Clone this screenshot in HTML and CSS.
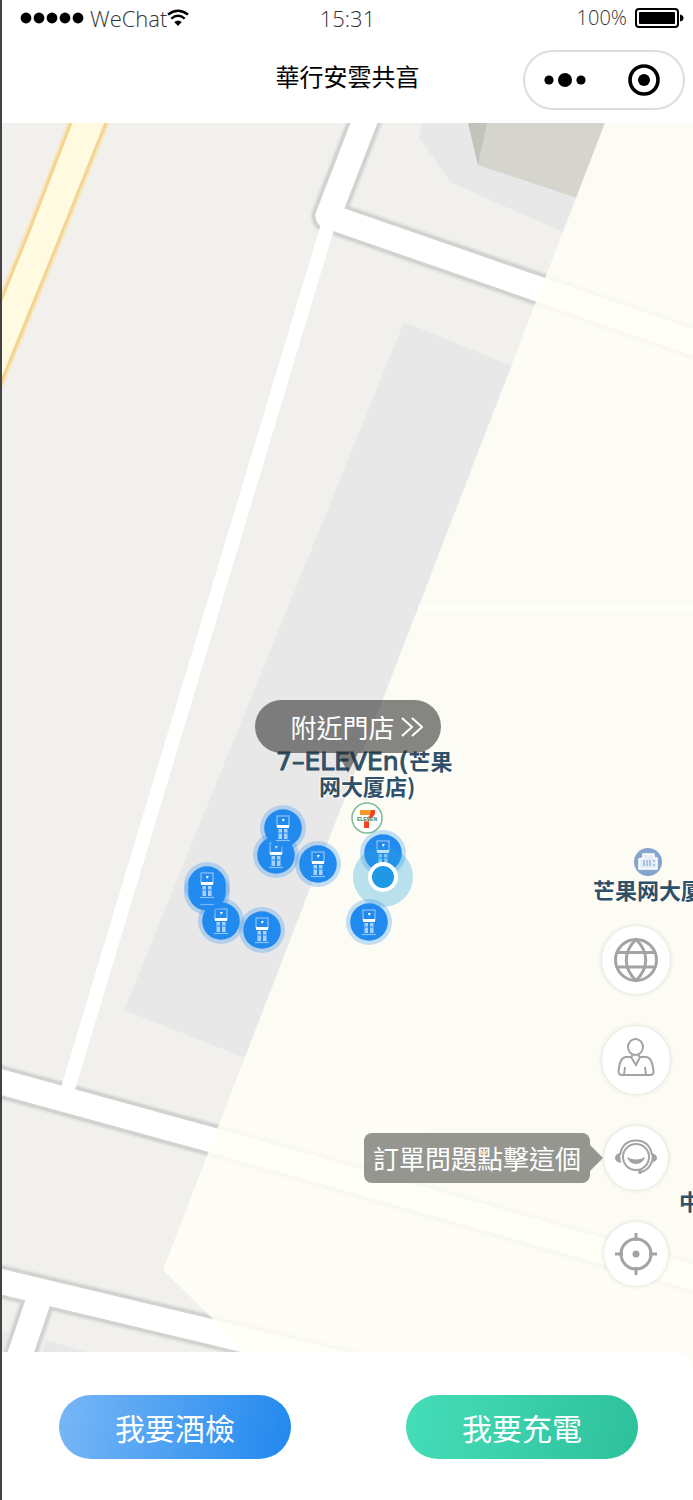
FILE: index.html
```html
<!DOCTYPE html>
<html lang="zh-Hant">

<head>
    <meta charset="UTF-8" />
    <meta name="viewport" content="width=device-width, initial-scale=1">
    <title>華行安雲共亯</title>
    <link rel="stylesheet" href="styles.css">
</head>

<body>
    <div class="status-bar">
        <div class="carrier">
            <svg class="signal" width="64" height="12" viewBox="0 0 64 12">
                <circle cx="6" cy="6" r="5.4" />
                <circle cx="19" cy="6" r="5.4" />
                <circle cx="32" cy="6" r="5.4" />
                <circle cx="45" cy="6" r="5.4" />
                <circle cx="58" cy="6" r="5.4" />
            </svg>
            <span class="carrier-name">WeChat</span>
            <svg class="wifi" width="22" height="18" viewBox="0 0 22 18" fill="none" stroke="#000" stroke-width="2.4">
                <path d="M1 5.6Q11 -2 21 5.6" />
                <path d="M4.3 9.6Q11 4 17.7 9.6" />
                <path d="M11 17L7.2 13Q11 9.8 14.8 13Z" fill="#000" stroke="none" />
            </svg>
        </div>
        <span class="clock">15:31</span>
        <div class="battery">
            <span>100%</span>
            <svg width="50" height="20" viewBox="0 0 50 20">
                <rect x="1" y="1" width="42" height="18" rx="3" fill="none" stroke="#000" stroke-width="2" />
                <rect x="4" y="4" width="36" height="12" rx="1" />
                <path d="M45 6.5Q48.500 7 48.500 10T45 13.500Z" />
            </svg>
        </div>
    </div>

    <header class="nav-bar">
        <h1 class="title">華行安雲共亯</h1>
        <div class="capsule">
            <button class="capsule-btn" type="button" aria-label="更多">
                <svg width="42" height="16" viewBox="0 0 42 16">
                    <circle cx="5" cy="8" r="4.6" />
                    <circle cx="21" cy="8" r="7" />
                    <circle cx="37" cy="8" r="4.6" />
                </svg>
            </button>
            <button class="capsule-btn" type="button" aria-label="關閉">
                <svg width="32" height="32" viewBox="0 0 32 32">
                    <circle cx="16" cy="16" r="14" fill="none" stroke="#000" stroke-width="3.600" />
                    <circle cx="16" cy="16" r="6" />
                </svg>
            </button>
        </div>
    </header>

    <main class="map">
        <svg class="map-canvas" viewBox="2 123 691 1249" preserveAspectRatio="xMidYMid slice">
            <defs>
                <symbol id="pin" viewBox="-24 -24 48 48">
                    <circle r="23" fill="#2a8ff0" opacity="0.28" />
                    <circle r="18.800" fill="#218aee" />
                    <g fill="none" stroke="#8fc4f8" stroke-width="1.200">
                        <rect x="-6" y="-12" width="12" height="10" />
                        <path d="M-7 12.500H7" />
                    </g>
                    <path d="M-4.500 1H-1V11H-4.500ZM1 1H4.500V11H1Z" fill="#a9d1fa" />
                    <path d="M-4.500 5H4.500" stroke="#218aee" />
                    <path d="M-6 -3H6V0H-6Z" fill="#fff" />
                    <path d="M-1 -9L2 -9L0 -6Z" fill="#fff" />
                </symbol>
                <g id="roads" fill="none">
                    <path d="M371 105L328 216L700 345" stroke-linejoin="round" />
                    <path d="M-10 1079L212 1140L350 1179L710 1282" />
                    <path d="M-10 1279L212 1332L420 1383" />
                    <path d="M42 1290L8 1390" />
                </g>
            </defs>

            <rect x="0" y="100" width="700" height="1300" fill="#f1f0ec" />

            <!-- blocks and buildings -->
            <g fill="#e8e8e8">
                <path d="M404 322L700 443V1238L124 1010Z" />
                <path d="M423 120L419 137L450 182L700 293V120Z" />
                <path d="M46 1340L100 1356V1380H30Z" />
                <path d="M0 1330L9 1332L0 1356Z" />
            </g>
            <path d="M468 123L478 165L577 198L606 120H468Z" fill="#d5d5cd" />
            <path d="M468 123H487L478 165Z" fill="#c2c3bd" />

            <!-- main road -->
            <path d="M72 120L28 234L-10 327V410L57 245L107 120Z" fill="#fffae0" stroke="#f8e6c0" stroke-width="7" />
            <path d="M72 120L28 234L-10 327V410L57 245L107 120Z" fill="#fffae0" stroke="#f3d490" stroke-width="3" />

            <!-- side roads, casing first -->
            <use href="#roads" stroke="#e6e6e2" stroke-width="36" />
            <use href="#roads" stroke="#d2d3d0" stroke-width="32" />
            <use href="#roads" stroke="#fff" stroke-width="25" />
            <path d="M328 225L67 1092" stroke="#fff" stroke-width="14" />

            <!-- service area -->
            <path d="M606 120L163 1270L275 1380H700V120Z" fill="#fffff6" opacity="0.86" />
            <path d="M418 608H700" stroke="#fff" stroke-width="4" opacity="0.8" />

            <g class="place">
                <text x="276" y="770"><tspan class="place-latin">7–ELEVEn(</tspan>芒果</text>
                <text x="319" y="795">网大厦店)</text>
                <text x="593" y="899">芒果网大厦</text>
                <text x="679" y="1210">中</text>
            </g>

            <g>
                <circle cx="367" cy="818" r="15" fill="#fff" stroke="#7fb89c" stroke-width="1.500" />
                <path d="M360 810H371V815H360Z" fill="#f39a26" />
                <path d="M371 810H375V814L369 822V828H364V821L370 815Z" fill="#f0431f" />
                <path d="M357 817.500H378V821.500H357Z" fill="#fff" opacity="0.7" />
                <text class="brand" x="367" y="821">ELEVEN</text>
            </g>

            <g>
                <circle cx="648" cy="862" r="14" fill="#85a5cf" />
                <path d="M639 869V859L643 858V854H654V858H657V869Z" fill="#e6eefa" stroke="#fff" stroke-width="1.500" />
                <path d="M644 860V866M647 860V866M650 860V866M654 860V862M654 864V866" stroke="#85a5cf" stroke-width="1.200" />
            </g>

            <use href="#pin" x="252" y="831" width="48" height="48" />
            <use href="#pin" x="259" y="804" width="48" height="48" />
            <use href="#pin" x="294" y="840" width="48" height="48" />
            <use href="#pin" x="197" y="897" width="48" height="48" />
            <use href="#pin" x="183" y="868" width="48" height="48" />
            <use href="#pin" x="183" y="861" width="48" height="48" />
            <use href="#pin" x="238" y="906" width="48" height="48" />
            <use href="#pin" x="359" y="829" width="48" height="48" />

            <!-- current position -->
            <circle cx="383" cy="877" r="30" fill="#2ba5e0" opacity="0.32" />
            <use href="#pin" x="345" y="898" width="48" height="48" />
            <circle cx="383" cy="877" r="13" fill="#1f98e6" stroke="#fff" stroke-width="4" />
        </svg>

        <button class="nearby" type="button">
            附近門店
            <svg width="22" height="20" viewBox="0 0 22 20" fill="none" stroke="#fff" stroke-width="2">
                <path d="M1 1L11 10L1 19M11 1L21 10L11 19" />
            </svg>
        </button>

        <div class="tools">
            <button class="tool" type="button" aria-label="語言">
                <svg width="46" height="46" viewBox="0 0 46 46">
                    <circle cx="23" cy="23" r="20.500" />
                    <path d="M23 2.500C10 15 10 31 23 43.500C36 31 36 15 23 2.500ZM5 15.500H41M5 30H41" />
                </svg>
            </button>
            <button class="tool thin" type="button" aria-label="個人中心">
                <svg width="46" height="46" viewBox="0 0 46 46">
                    <ellipse cx="22.500" cy="10" rx="7.500" ry="8" />
                    <path d="M18 20H13C7 20 6 29 5.500 34Q5.500 38 9 38H37Q41 38 40.500 34C40 29 39 20 33 20H27L23 28L18 20M20 18L18 20M25 18L27 20M12 30L11 38M32 30L33 38" />
                </svg>
            </button>
            <div class="tool-row">
                <span class="tip">訂單問題點擊這個</span>
                <button class="tool small thin" type="button" aria-label="訂單問題">
                    <svg width="46" height="46" viewBox="0 0 46 46">
                        <circle cx="23" cy="22" r="13" />
                        <path d="M7 20C9 9 15 5.500 23 5.500S37 9 39 20M39 26Q36 36 27 37" />
                        <path d="M7 18Q2 19 2 23T8 28ZM39 18Q44 20 44 23T38 28Z" fill="#a3a3a3" stroke="none" />
                        <path d="M14 22Q23 27 32 22Q30 29 23 29T14 22Z" fill="#a3a3a3" stroke="none" />
                        <circle cx="27" cy="37" r="2" fill="#a3a3a3" stroke="none" />
                    </svg>
                </button>
            </div>
            <button class="tool small" type="button" aria-label="定位">
                <svg width="46" height="46" viewBox="0 0 46 46">
                    <circle cx="23" cy="23" r="15" />
                    <circle cx="23" cy="23" r="3.500" fill="#a3a3a3" stroke="none" />
                    <path d="M23 2V10M23 36V44M2 23H10M36 23H44" />
                </svg>
            </button>
        </div>
    </main>

    <footer class="actions">
        <button class="action alcohol" type="button">我要酒檢</button>
        <button class="action charge" type="button">我要充電</button>
    </footer>
</body>

</html>
```
FILE: styles.css
```css
* {
    box-sizing: border-box;
}

body {
    margin: 0;
    min-height: 100vh;
    display: flex;
    flex-direction: column;
    border-left: 2px solid #434347;
    background: #fff;
    color: #000;
    font-family: "Noto Sans CJK TC", sans-serif;
    overflow-x: hidden;
}

button {
    border: 0;
    padding: 0;
    background: none;
    font-family: inherit;
    cursor: pointer;
}

svg {
    display: block;
    flex: none;
}

.status-bar {
    display: grid;
    grid-template-columns: 1fr auto 1fr;
    align-items: center;
    height: 36px;
    padding: 0 8px;
    color: #333;
    font-family: "Open Sans", sans-serif;
    font-weight: 300;
    font-size: 22px;
    line-height: 34px;
}

.carrier {
    display: flex;
    align-items: center;
    padding-left: 10px;
}

.carrier-name {
    margin-left: 6px;
}

.battery {
    display: flex;
    align-items: center;
    justify-content: flex-end;
    gap: 8px;
    font-size: 20px;
}

.nav-bar {
    display: grid;
    grid-template-columns: 1fr auto 1fr;
    align-items: center;
    height: 87px;
    padding: 0 8px;
}

.title {
    grid-column: 2;
    margin: 0;
    padding-bottom: 8px;
    font-size: 24px;
    font-weight: 400;
    line-height: 32px;
}

.capsule {
    justify-self: end;
    display: flex;
    width: 162px;
    height: 60px;
    border: 2px solid #dedede;
    border-radius: 30px;
}

.capsule-btn {
    flex: 1;
    display: flex;
    align-items: center;
    justify-content: center;
}

/* runs under the rounded top of the action panel */
.map {
    position: relative;
    flex: 1;
    min-height: 1180px;
    margin-bottom: -20px;
    overflow: hidden;
}

.map-canvas {
    position: absolute;
    top: 0;
    left: 0;
    width: 100%;
    height: 100%;
}

.place {
    fill: #2f5066;
    stroke: #fff;
    stroke-width: 2px;
    paint-order: stroke;
    font-family: "Noto Sans CJK SC", sans-serif;
    font-size: 22px;
    font-weight: 700;
}

.place-latin {
    stroke: #2f5066;
    stroke-width: 1px;
    font-family: "DejaVu Sans", sans-serif;
    font-size: 25px;
    font-weight: 400;
}

.brand {
    fill: #2b8a63;
    font-family: "Liberation Sans", sans-serif;
    font-size: 5px;
    font-weight: 700;
    text-anchor: middle;
}

.nearby {
    position: absolute;
    top: 577px;
    left: 50%;
    transform: translateX(-50%);
    display: flex;
    align-items: center;
    justify-content: center;
    gap: 6px;
    width: 186px;
    height: 53px;
    padding-left: 18px;
    border-radius: 27px;
    background: rgba(40, 40, 40, 0.56);
    color: #fff;
    font-size: 26px;
    font-weight: 400;
    white-space: nowrap;
}

.nearby::after {
    content: "";
    position: absolute;
    top: 100%;
    left: 50%;
    margin-left: -10px;
    border: 10px solid transparent;
    border-top: 20px solid rgba(40, 40, 40, 0.56);
    border-bottom: 0;
}

.tools {
    position: absolute;
    top: 803px;
    right: 23px;
    display: flex;
    flex-direction: column;
    align-items: flex-end;
    gap: 32px;
}

.tool {
    display: flex;
    align-items: center;
    justify-content: center;
    width: 68px;
    height: 68px;
    border-radius: 50%;
    background: #fff;
    box-shadow: 0 0 5px rgba(0, 0, 0, 0.14);
}

.tool.small {
    width: 64px;
    height: 64px;
    margin-right: 2px;
}

.tool svg {
    fill: none;
    stroke: #a3a3a3;
    stroke-width: 3px;
}

.tool.thin svg {
    stroke-width: 2px;
}

.tool-row {
    display: flex;
    align-items: center;
    gap: 14px;
}

.tip {
    position: relative;
    padding: 0 9px;
    border-radius: 8px;
    background: #95968f;
    color: #fff;
    font-size: 26px;
    line-height: 50px;
    white-space: nowrap;
}

.tip::after {
    content: "";
    position: absolute;
    top: 12px;
    left: 100%;
    border: 13px solid transparent;
    border-left-color: #95968f;
    border-right: 0;
}

.actions {
    position: relative;
    display: flex;
    justify-content: space-between;
    gap: 24px;
    height: 148px;
    padding: 43px 55px 0 57px;
    border-radius: 0 20px 0 0;
    background: #fff;
}

.action {
    flex: 0 1 232px;
    height: 64px;
    border-radius: 32px;
    color: #fff;
    font-size: 30px;
}

.alcohol {
    background: linear-gradient(100deg, #78b7f6, #2188ee);
}

.charge {
    background: linear-gradient(100deg, #45deb8, #2dc09b);
}
```
